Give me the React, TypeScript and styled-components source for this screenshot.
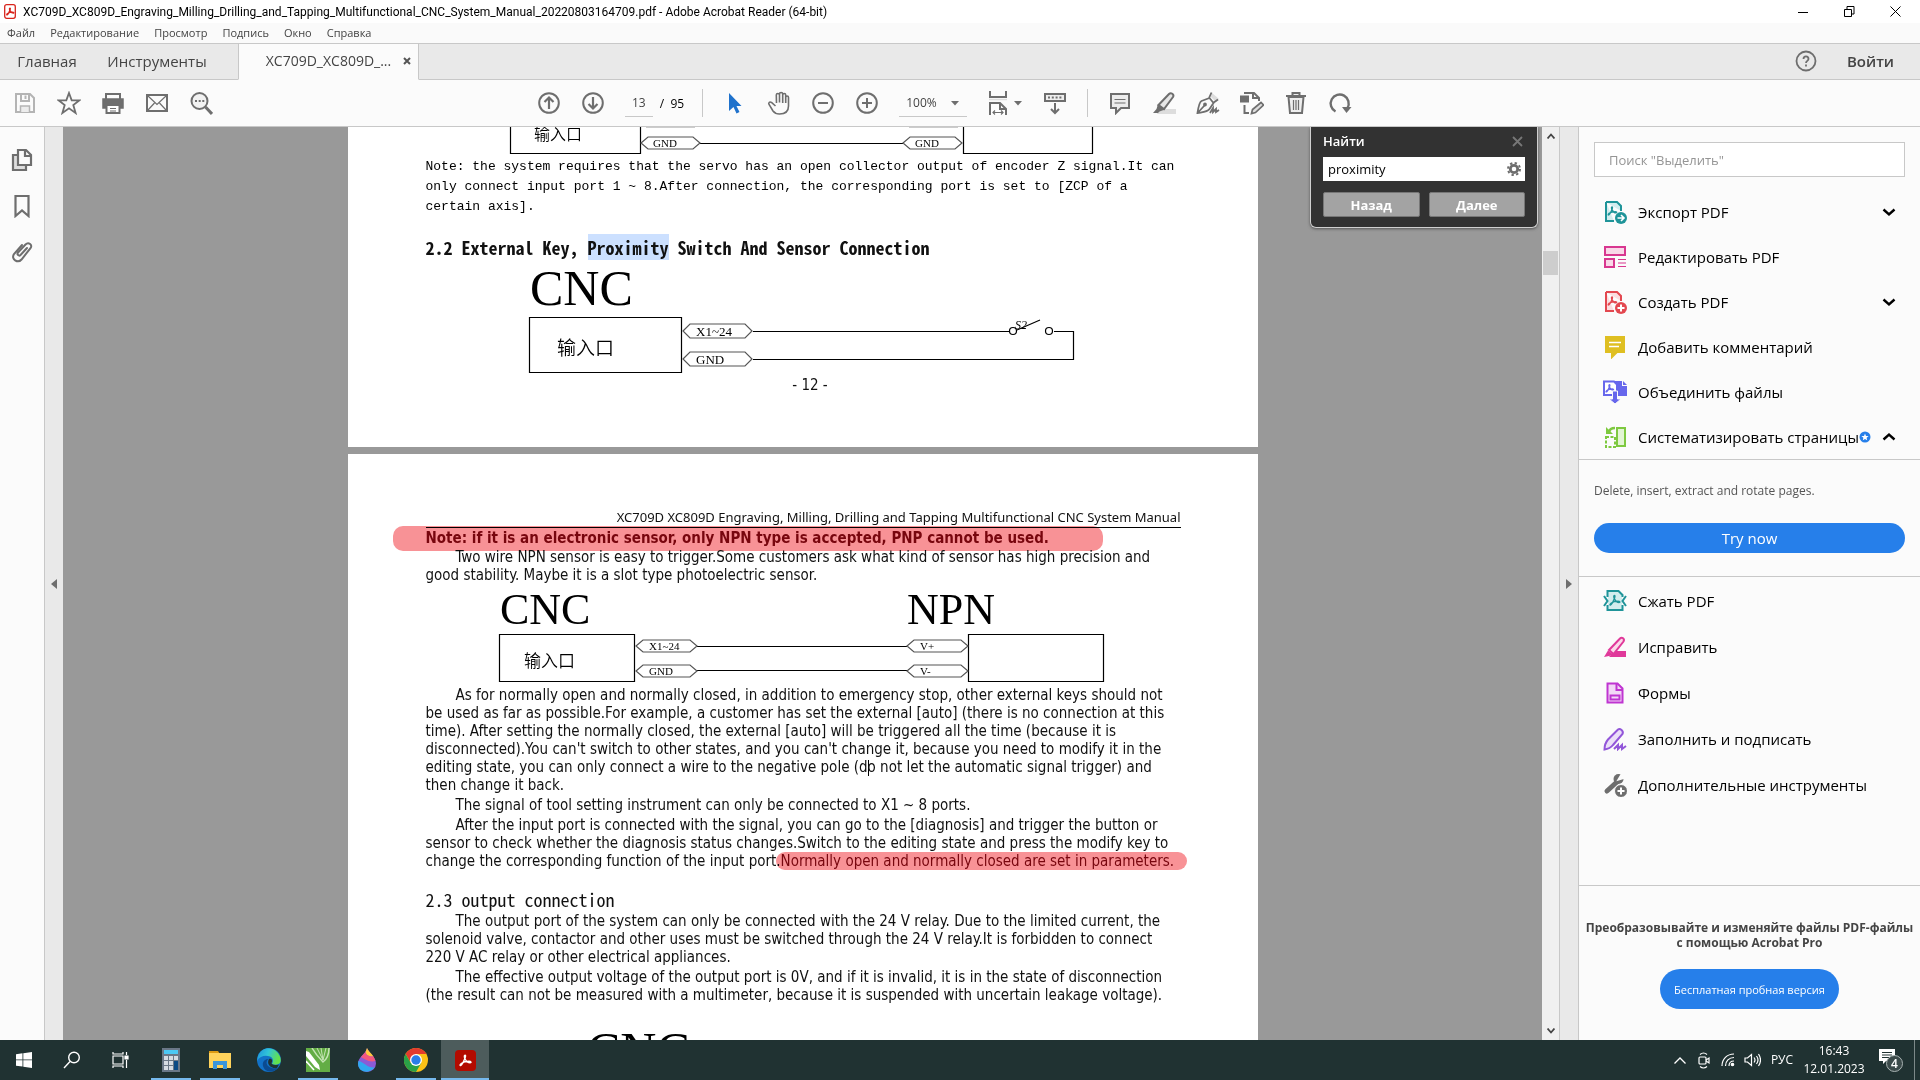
import React from 'react';
import styled, { createGlobalStyle } from 'styled-components';

const ui = `"Open Sans", "Noto Sans", sans-serif`;
const doc = `"DejaVu Sans Condensed", "Noto Sans", sans-serif`;
const mono = `"Noto Sans Mono CJK SC", "Liberation Mono", "Noto Sans CJK SC", monospace`;
const typed = `"Liberation Mono", "DejaVu Sans Mono", monospace`;
const line = '#c8c8c8';
const ink = '#6e6e6e';

const Global = createGlobalStyle`
  * { box-sizing: border-box; }
  body { margin: 0; background: #fbfbfb; font-family: ${ui}; color: #000; overflow: hidden; }
  button, input, select { font-family: inherit; }
  button { border: 0; padding: 0; background: none; color: inherit; }
  p, h1, h2, ul { margin: 0; padding: 0; }
  svg { display: block; }
`;

const Window = styled.div`
  display: flex;
  flex-direction: column;
  height: 100vh;
`;

/* ---------- title, menu and tabs ---------- */
const TitleBar = styled.header`
  display: flex;
  align-items: center;
  height: 23px;
  padding: 0 2px 0 4px;
  gap: 7px;
  background: #fff;
`;
const Title = styled.h1`
  flex: 1;
  font-family: Roboto, ${ui};
  font-size: 12px;
  font-weight: 400;
  white-space: nowrap;
`;
const WindowButtons = styled.div`
  display: flex;
`;
const WindowButton = styled.button`
  display: grid;
  place-items: center;
  width: 46px;
  height: 23px;
`;
const MenuBar = styled.nav`
  display: flex;
  align-items: center;
  gap: 15px;
  height: 20px;
  padding: 0 0 1px 7px;
  background: #fafafa;
`;
const MenuButton = styled.button`
  font-size: 11px;
  color: #444;
`;
const TabBar = styled.div`
  display: flex;
  height: 37px;
  background: #e9e9e9;
  border-top: 1px solid ${line};
`;
const Tab = styled.button<{ $width: number; $active?: boolean; $tail?: number }>`
  width: ${p => p.$width}px;
  display: flex;
  align-items: center;
  justify-content: center;
  gap: 12px;
  font-size: ${p => (p.$active ? 14 : 15)}px;
  color: #444;
  background: ${p => (p.$active ? '#fbfbfb' : 'transparent')};
  border-left: ${p => (p.$active ? `1px solid ${line}` : '0')};
  border-right: ${p => (p.$active ? `1px solid ${line}` : '0')};
  border-bottom: 1px solid ${p => (p.$active ? '#fbfbfb' : line)};
  padding: 0 ${p => p.$tail ?? 0}px 2px ${p => (p.$active ? 20 : 0)}px;
`;
const TabFill = styled.div`
  flex: 1;
  display: flex;
  align-items: center;
  justify-content: flex-end;
  gap: 30px;
  padding: 0 26px 2px 0;
  border-bottom: 1px solid ${line};
`;
const SignIn = styled.button`
  font-size: 15px;
  font-weight: 600;
  color: #444;
`;

/* ---------- toolbar ---------- */
const Toolbar = styled.div`
  display: grid;
  grid-template-columns: 1fr auto 1fr;
  align-items: center;
  height: 47px;
  padding: 0 34px 0 3px;
  background: #fbfbfb;
  border-bottom: 1px solid ${line};
`;
const Tools = styled.div`
  display: flex;
  align-items: center;
`;
const ToolButton = styled.button<{ $width?: number; $before?: number }>`
  display: grid;
  place-items: center;
  width: ${p => p.$width ?? 44}px;
  height: 44px;
  margin-left: ${p => p.$before ?? 0}px;
`;
const Divider = styled.span`
  width: 1px;
  height: 28px;
  margin: 0 10px;
  background: ${line};
`;
const PageBox = styled.label`
  display: flex;
  align-items: center;
  gap: 7px;
  padding: 0 8px 0 10px;
  font-size: 12px;
`;
const PageInput = styled.input`
  width: 28px;
  height: 27px;
  padding: 0;
  border: 0;
  border-bottom: 1px solid ${line};
  background: none;
  text-align: center;
  font-size: 12px;
  color: #444;
`;
const Zoom = styled.div`
  display: flex;
  align-items: center;
  width: 68px;
  height: 27px;
  margin: 0 18px 0 10px;
  border-bottom: 1px solid ${line};
`;
const ZoomSelect = styled.select`
  appearance: none;
  width: 50px;
  padding: 0 0 0 7px;
  border: 0;
  background: none;
  font-size: 12px;
  color: #444;
`;

/* ---------- work area ---------- */
const Work = styled.main`
  flex: 1;
  min-height: 0;
  display: flex;
`;
const Rail = styled.nav`
  display: flex;
  flex-direction: column;
  align-items: center;
  gap: 18px;
  width: 45px;
  padding-top: 19px;
  border-right: 1px solid ${line};
`;
const RailButton = styled.button`
  display: grid;
  place-items: center;
  width: 28px;
  height: 28px;
`;
const Strip = styled.button`
  display: grid;
  place-items: center;
  width: 18px;
  background: #e9e9e9;
`;
const Viewport = styled.div`
  position: relative;
  flex: 1;
  display: flex;
  flex-direction: column;
  align-items: center;
  gap: 7px;
  overflow: hidden;
  background: #999;
`;
const Page = styled.article<{ $top: number; $bottom: number }>`
  flex: none;
  width: 910px;
  padding: ${p => p.$top}px 77px ${p => p.$bottom}px 78px;
  background: #fff;
  font-family: ${doc};
  font-size: 15px;
  line-height: 18px;
  color: #111;
`;
const Line = styled.span`
  display: block;
  white-space: nowrap;
`;
const MonoNote = styled.p`
  font-family: ${typed};
  font-size: 13px;
  line-height: 20px;
  color: #000;
`;
const MonoHeading = styled.h2<{ $light?: boolean }>`
  margin-top: ${p => (p.$light ? 17 : 18)}px;
  font-family: ${mono};
  font-size: 18px;
  font-weight: ${p => (p.$light ? 400 : 600)};
  line-height: 25px;
  white-space: nowrap;
`;
const Found = styled.span`
  background: #cce0ff;
`;
const PageNumber = styled.p`
  padding-left: 14px;
  text-align: center;
`;
const RunningHead = styled.p`
  font-family: "Noto Sans", sans-serif;
  font-size: 13px;
  line-height: 20px;
  text-align: right;
  white-space: nowrap;
  border-bottom: 1px solid #000;
`;
const Warning = styled.p`
  height: 22px;
  margin-top: -2px;
  line-height: 25px;
  font-weight: 700;
  white-space: nowrap;
`;
const Mark = styled.mark<{ $left: number; $right: number }>`
  display: inline-block;
  margin-left: -${p => p.$left}px;
  padding: 0 ${p => p.$right}px 0 ${p => p.$left}px;
  border-radius: 10px;
  background: #f89296;
  color: #78060e;
  mix-blend-mode: multiply;
`;
const Para = styled.p`
  margin-bottom: 2px;
  text-indent: 30px;
  & > span + span { text-indent: 0; }
  mark { text-indent: 0; }
`;
const Caret = styled.i`
  display: inline-block;
  width: 1px;
  height: 16px;
  margin-right: -1px;
  vertical-align: text-bottom;
  background: #000;
`;

/* ---------- find box ---------- */
const FindBox = styled.form`
  position: absolute;
  top: 0;
  right: 4px;
  width: 228px;
  padding: 4px 12px 10px 12px;
  background: #323232;
  border: 1px solid #d0d0d0;
  border-top: 0;
  border-radius: 0 0 6px 6px;
  box-shadow: 0 1px 3px #555;
  color: #fff;
`;
const FindHead = styled.div`
  display: flex;
  justify-content: space-between;
  align-items: center;
  height: 20px;
  padding-right: 2px;
  font-size: 13px;
  font-weight: 600;
`;
const FindField = styled.div`
  display: flex;
  align-items: center;
  height: 24px;
  margin: 6px 0 11px;
  padding-right: 4px;
  background: #fff;
`;
const FindInput = styled.input`
  flex: 1;
  min-width: 0;
  padding: 0 0 0 5px;
  border: 0;
  background: none;
  font-size: 13px;
`;
const FindActions = styled.div`
  display: grid;
  grid-template-columns: 1fr 1fr;
  gap: 9px;
`;
const FindButton = styled.button`
  height: 25px;
  border: 1px solid #777;
  border-radius: 2px;
  background: #a3a3a3;
  font-size: 13px;
  font-weight: 700;
  color: #fff;
`;

/* ---------- scroll bar ---------- */
const ScrollBar = styled.div`
  display: flex;
  flex-direction: column;
  align-items: center;
  width: 18px;
  background: #f0f0f0;
  border-right: 1px solid ${line};
`;
const ScrollButton = styled.button`
  display: grid;
  place-items: center;
  width: 16px;
  height: 18px;
`;
const Track = styled.div`
  flex: 1;
  padding-top: 106px;
`;
const Thumb = styled.div`
  width: 15px;
  height: 24px;
  background: #cdcdcd;
`;

/* ---------- tools panel ---------- */
const Panel = styled.aside`
  display: flex;
  flex-direction: column;
  width: 342px;
  border-left: 1px solid ${line};
  background: #fbfbfb;
`;
const SearchField = styled.input`
  height: 35px;
  margin: 15px 15px 12px;
  padding: 0 14px;
  border: 1px solid ${line};
  background: #fff;
  font-size: 13px;
  color: #333;
  &::placeholder { color: #959595; opacity: 1; }
`;
const ToolList = styled.ul<{ $pitch: number }>`
  list-style: none;
  display: grid;
  grid-template-columns: 100%;
  grid-auto-rows: ${p => p.$pitch}px;
`;
const ToolRow = styled.button`
  display: flex;
  align-items: center;
  width: 100%;
  height: 100%;
  padding: 0 24px;
  gap: 11px;
  font-size: 15px;
  text-align: left;
  white-space: nowrap;
  svg { flex: none; }
`;
const RowName = styled.span`
  flex: 1;
  min-width: 0;
`;
const Promo = styled.section`
  display: flex;
  flex-direction: column;
  gap: 22px;
  height: 118px;
  margin-bottom: 1px;
  padding: 21px 15px 0;
  border-top: 1px solid ${line};
  border-bottom: 1px solid ${line};
  font-size: 12px;
  line-height: 20px;
  color: #555;
`;
const BlueButton = styled.button<{ $tall?: boolean }>`
  height: ${p => (p.$tall ? 40 : 30)}px;
  padding: 0 14px;
  border-radius: 20px;
  background: #267fea;
  font-size: ${p => (p.$tall ? 11 : 15)}px;
  color: #fff;
`;
const Upsell = styled.section`
  display: flex;
  flex-direction: column;
  align-items: center;
  gap: 19px;
  margin-top: auto;
  padding: 34px 0 31px;
  border-top: 1px solid ${line};
  text-align: center;
  font-size: 12px;
  font-weight: 700;
  line-height: 15px;
  color: #444;
  white-space: nowrap;
`;

/* ---------- task bar ---------- */
const TaskBar = styled.footer`
  display: flex;
  height: 40px;
  background: #203232;
  color: #fff;
`;
const Task = styled.button<{ $open?: boolean; $active?: boolean; $after?: number }>`
  display: grid;
  place-items: center;
  width: 48px;
  height: 40px;
  margin-right: ${p => p.$after ?? 1}px;
  background: ${p =>
    p.$open
      ? `linear-gradient(#76b9ed, #76b9ed) center bottom / ${p.$active ? 48 : 40}px 2px no-repeat`
      : 'none'};
  background-color: ${p => (p.$active ? '#4d5c5c' : 'transparent')};
`;
const Tray = styled.div`
  display: flex;
  align-items: center;
  margin-left: auto;
  padding-right: 1px;
  font-size: 12px;
`;
const TrayButton = styled.button<{ $width: number }>`
  display: grid;
  place-items: center;
  width: ${p => p.$width}px;
  height: 40px;
  font-size: 12px;
  line-height: 18px;
`;
const ShowDesktop = styled.button`
  width: 5px;
  height: 40px;
  border-left: 1px solid #7c8888;
`;

/* ---------- icons ---------- */
type IconProps = { size?: number; w?: number; color?: string; children: React.ReactNode };
const Icon = ({ size = 24, w = 2, color = ink, children }: IconProps) => (
  <svg width={size} height={size} viewBox="0 0 24 24" fill="none" stroke={color} strokeWidth={w} aria-hidden="true">
    {children}
  </svg>
);
const PdfMark = ({ x = 0, y = 0, s = 1 }: { x?: number; y?: number; s?: number }) => (
  <path
    transform={`translate(${x} ${y}) scale(${s})`}
    strokeWidth={1.4 / s}
    d="M6 1C5 1 5.200 3 6 4.500C7 6.500 8.500 8 10.500 8C12 8 11.500 6.600 9.500 6.600C7 6.600 4 7.500 2.500 8.700C.5 10.300 1.500 11.300 2.800 9.800C4.500 7.800 7.500 1 6 1Z"
  />
);
const Triangle = ({ dir }: { dir: 'left' | 'right' | 'down' }) => {
  const d = { left: 'M9 1v10L3 6z', right: 'M3 1v10l6-5z', down: 'M2 4h8L6 8.500z' }[dir];
  return (
    <svg width="12" height="12" viewBox="0 0 12 12" aria-hidden="true"><path d={d} fill={ink} /></svg>
  );
};
const Chevron = ({ up }: { up?: boolean }) => (
  <svg width="14" height="14" viewBox="0 0 14 14" fill="none" stroke="#000" strokeWidth="2.400" aria-hidden="true">
    <path d={up ? 'M1.500 9.500L7 4.500l5.500 5' : 'M1.500 4.500L7 9.500l5.500-5'} />
  </svg>
);

const icons = {
  save: (
    <Icon color="#b4b4b4">
      <path d="M3 3h14l4 4v14H3z" /><path d="M8 3v7h8V3" /><path d="M12.500 4.500v3.500" /><path d="M7.500 21v-6h9v6" fill="#ececec" strokeWidth="1.500" />
    </Icon>
  ),
  star: <Icon w={1.8}><path d="M12 2l2.700 7.300H22.500l-6.200 4.800 2.300 7.900L12 17.300 5.400 22l2.300-7.900L1.500 9.300h7.800z" /></Icon>,
  print: (
    <Icon>
      <path d="M5 8V3h14v5" /><path d="M2 8h20v9h-3v-2H5v2H2z" fill={ink} strokeWidth="1.500" /><path d="M5.500 14h13v8h-13z" fill="#fff" /><path d="M9 17.500h6M9 20h6" strokeWidth="1" />
    </Icon>
  ),
  mail: <Icon><path d="M2 4h20v16H2z" /><path d="M3 5l9 8.500L21 5M3 19l6.500-7M21 19l-6.500-7" strokeWidth="1.200" /></Icon>,
  search: (
    <Icon><circle cx="10.500" cy="10" r="8" fill="#f2f2f2" /><path d="M16.500 16l6.500 7" strokeWidth="3" /><path d="M6 10h2M9.700 10h2M13.300 10h2" /></Icon>
  ),
  up: <Icon><circle cx="12" cy="12" r="9.800" /><path d="M12 18V7M7.500 11L12 6.500l4.500 4.500" strokeWidth="2.200" /></Icon>,
  down: <Icon><circle cx="12" cy="12" r="9.800" /><path d="M12 6v11M7.500 13l4.500 4.500 4.500-4.500" strokeWidth="2.200" /></Icon>,
  pointer: <Icon w={0}><path d="M6 2v18l4.500-4 3 6.500 3-1.500-3-6h5z" fill="#1f72cc" /></Icon>,
  hand: (
    <Icon w={1.6}>
      <path d="M8.500 15L4.500 11.500c-2-1.300-3.500.5-2.300 2.200L6 20c1.500 2 3 3 6.500 3 6 0 9-3 9-8V6.500c0-2-2.800-2-2.800 0V12M18.700 12V4c0-2-3-2-3 0v8M15.700 11.500V3c0-2-3.200-2-3.200 0v8.500M12.500 11.500V4c0-2-3.200-2-3.200 0L9.500 12" />
    </Icon>
  ),
  minus: <Icon><circle cx="12" cy="12" r="9.800" /><path d="M7 12h10" /></Icon>,
  plus: <Icon><circle cx="12" cy="12" r="9.800" /><path d="M7 12h10M12 7v10" /></Icon>,
  fit: (
    <Icon>
      <path d="M4 0v6h16V0" /><path d="M4 24V12h10l6 6v6M14 12v6h6" fill="#fff" /><path d="M7 21.500h10M9 19.500l-2 2 2 2M15 19.500l2 2-2 2" strokeWidth="1.200" /><path d="M3 8.500h18" stroke="#ddd" strokeWidth="1.500" />
    </Icon>
  ),
  scroll: <Icon><path d="M2 3h20v7H2z" fill="#eee" /><path d="M5 6.500h14" strokeDasharray="2 1.800" /><path d="M12 12v10M8 18l4 4 4-4" /></Icon>,
  comment: <Icon><path d="M3 3h18v14h-8l-5 5v-5H3z" fill="#ececec" /><path d="M6.500 8.500h11M6.500 12h11" strokeWidth="1.200" /></Icon>,
  highlight: (
    <Icon>
      <path d="M7 18h17v5H5z" fill="#ddd" stroke="none" /><path d="M6.500 14L17 3c2-2 5.500.5 4 3L12 18z" fill="#e6e6e6" /><path d="M6 13l7 5.500-5.500 2L6 22H1l3.500-4z" fill={ink} stroke="none" />
    </Icon>
  ),
  sign: (
    <Icon w={1.8}>
      <path d="M14 5l2-3 7 6-3 3z" fill="#ddd" stroke="none" /><path d="M1.500 22c1-7 2-11 4-12l8-3 4 5-4 6c-2 3-6 3-12 4zM2 21.500l6.500-7M13 7l2.500-5.500M17 12l5-3.500" /><path d="M14 22l3-5v4l3-3v3l3-2" /><circle cx="9" cy="13.500" r="1" />
    </Icon>
  ),
  edit: (
    <Icon>
      <path d="M1 5.500h7v5H1z" fill={ink} /><path d="M5 3V2h9l5 5v3M13 2v5h5M4.500 14v8H9" /><path d="M11.500 22.500l1-4 8.500-7 2.500 2.500-8 7.500z" fill="#ddd" strokeWidth="1.700" />
    </Icon>
  ),
  trash: <Icon><path d="M2 5h20M8.500 4V2h7v2M4.500 6L6 22h12l1.500-16z" fill="#eee" /><path d="M9.500 9v10M12 9v10M14.500 9v10" strokeWidth="1.200" /></Icon>,
  rotate: <Icon w={2.4}><path d="M7.500 20.500A9 9 0 1 1 19.500 17" /><path d="M14 16h9.500l-5 6z" fill={ink} stroke="none" /></Icon>,
  pages: <Icon w={2.2}><path d="M7 7H3v15h13v-4" fill="#ddd" /><path d="M8 2h8l5 5v10H8z" fill="#fbfbfb" /><path d="M15 2v6h6" /></Icon>,
  bookmark: <Icon w={2.2}><path d="M5.500 2h13v20L12 16.500 5.500 22z" /></Icon>,
  clip: <Icon w={2}><path d="M17 8l-6.500 7c-1.500 1.500-4-.5-2.500-2.300L15.500 4.500c3-3 7.500.5 5 3.700L11.500 19.500c-3.500 4-11 0-7.500-5.500L12 5" strokeLinecap="round" /></Icon>,
};

const panelIcons: Record<string, React.ReactNode> = {
  export: (
    <Icon color="#1f9499"><path d="M3 2h11l4 4v5M11 21H3V2" fill="#d3edee" /><PdfMark x={4} y={6} s={0.85} /><circle cx="18" cy="18" r="6" fill="#1f9499" stroke="none" /><path d="M14.500 18h6M18 15l3 3-3 3" stroke="#fff" strokeWidth="1.600" /></Icon>
  ),
  edit: <Icon color="#d83790"><path d="M2 2h20v8H2zM2 14h9v8H2z" fill="#f9d8e8" /><path d="M15 14.500h8M15 18h8M15 21.500h8" strokeWidth="1.200" /></Icon>,
  create: (
    <Icon color="#e34850"><path d="M3 2h11l4 4v5M11 21H3V2" fill="#fbdddf" /><PdfMark x={4} y={6} s={0.85} /><circle cx="18" cy="18" r="6" fill="#e34850" stroke="none" /><path d="M14.500 18h7M18 14.500v7" stroke="#fff" strokeWidth="2" /></Icon>
  ),
  comment: <Icon color="#dfbf22"><path d="M3 2h18v15h-7l-5 5v-5H3z" fill="#dfbf22" /><path d="M6 7.500h12M6 11.500h10" stroke="#fff" strokeWidth="1.600" /></Icon>,
  combine: (
    <Icon color="#6767ec"><path d="M12 1h7v5h5v10H12z" fill="#6767ec" stroke="none" /><path d="M20 1l4 4h-4z" fill="#6767ec" stroke="none" /><path d="M1 1.500h10l3 3V15H1z" fill="#fff" /><PdfMark x={2} y={4} s={0.75} /><path d="M9.500 11h5v8h3.500l-6 5-6-5h3.500z" fill="#6767ec" stroke="#fbfbfb" strokeWidth="1" /></Icon>
  ),
  organize: (
    <Icon color="#7ec940"><path d="M14 3h8v18h-8z" fill="#e2f5d3" /><path d="M3 12h9v10H3z" strokeDasharray="3 1.500" /><path d="M12 3c-4 0-5.500 1.500-6 4" strokeWidth="2.500" /><path d="M3 2v7h7z" fill="#7ec940" stroke="none" /></Icon>
  ),
  compress: (
    <Icon color="#1f9499"><path d="M4.500 8V2h11l4 4v2M19.500 16v5h-15v-5" fill="#d3edee" /><path d="M5 8h14v8H5z" fill="#d3edee" stroke="none" /><path d="M1 7l3.500 5L1 17M23 7l-3.500 5 3.500 5" /><PdfMark x={5.500} y={5.500} /></Icon>
  ),
  redact: (
    <Icon color="#e0399a"><path d="M12 16h11v6H6z" fill="#e0399a" stroke="none" /><path d="M6 15L17 3.500c2-2 5 .5 3.500 3L10.500 19z" fill="#fbd9ea" /><path d="M5 15.500l6 4.500-10 2z" fill="#e0399a" stroke="none" /></Icon>
  ),
  forms: <Icon color="#bf35d1"><path d="M4.500 2.500h10l5 5v14h-15z" fill="#f2d7f6" /><path d="M13.500 3v6h6M7.500 14.500h9v4h-9z" /></Icon>,
  fill: <Icon color="#9256d9"><path d="M1.500 22.500c0-4 1-7 3.500-10l10-10c2-1.500 6 1.500 4.500 4.500L10 18c-2 2.500-5 4-8.500 4.500z" fill="#ebdff8" /><path d="M11 22l4-4v4l4-4v4l4-3" /></Icon>,
  more: (
    <Icon color={ink}><path d="M4 18L15 8" strokeWidth="5" strokeLinecap="round" /><circle cx="15.500" cy="6" r="5" fill={ink} stroke="none" /><path d="M15.500 6.500l3-5 3.500 3z" fill="#fbfbfb" stroke="#fbfbfb" /><circle cx="18" cy="18" r="6.500" fill={ink} stroke="#fbfbfb" strokeWidth="1" /><path d="M14.500 18h7M18 14.500v7" stroke="#fff" /></Icon>
  ),
};

/* ---------- wiring drawings ---------- */
const Art = styled.svg`
  overflow: visible;
  font-family: "Liberation Serif", serif;
  text { fill: #000; stroke: none; }
  .cjk { font-family: "Noto Sans CJK SC", sans-serif; font-weight: 350; }
`;
const Plug = ({ x, y, w, h, label, size, dx = 13 }: { x: number; y: number; w: number; h: number; label: string; size: number; dx?: number }) => (
  <g>
    <path d={`M${x} ${y}l7-${h / 2}h${w - 14}l7 ${h / 2}l-7 ${h / 2}h-${w - 14}z`} stroke="#555" />
    <text x={x + dx} y={y + size * 0.35} fontSize={size}>{label}</text>
  </g>
);
const drawing = { width: '100%', fill: 'none', stroke: '#000', strokeWidth: 1.2 };

const TopDrawing = () => (
  <Art {...drawing} height="30">
    <path d="M84.500 0V26.500H214.500V0M537.500 0V26.500H666.500V0M274 16.500H477" />
    <path d="M220 .5h49M483 .5h49" stroke="#ccc" />
    <Plug x={215} y={16} w={59} h={12} label="GND" size={11} dx={12} />
    <Plug x={477} y={16} w={59} h={12} label="GND" size={11} dx={12} />
    <text className="cjk" x="108" y="13" fontSize="16">输入口</text>
  </Art>
);
const SwitchDrawing = () => (
  <Art {...drawing} height="116">
    <text x="104" y="45" fontSize="50">CNC</text>
    <path d="M103.500 57.500h152v55h-152zM327 71.500H583M628 71.500h19.500v28H327M591 70L614 60" />
    <circle cx="587" cy="71" r="3.500" /><circle cx="623" cy="71" r="3.500" />
    <Plug x={257} y={71} w={69} h={14} label="X1~24" size={13} />
    <Plug x={257} y={99} w={69} h={14} label="GND" size={13} />
    <text x="589" y="69" fontSize="12" fontStyle="italic">S2</text>
    <text className="cjk" x="131" y="95" fontSize="19">输入口</text>
  </Art>
);
const SensorDrawing = () => (
  <Art {...drawing} height="100">
    <text x="74" y="38" fontSize="44">CNC</text>
    <text x="481" y="38" fontSize="44">NPN</text>
    <path d="M73.500 48.500h135v47h-135zM542.500 48.500h135v47h-135zM271 60.500H481M271 84.500H481" />
    <Plug x={210} y={60} w={61} h={12} label="X1~24" size={11} />
    <Plug x={210} y={85} w={61} h={12} label="GND" size={11} />
    <Plug x={481} y={60} w={61} h={12} label="V+" size={11} />
    <Plug x={481} y={85} w={61} h={12} label="V-" size={11} />
    <text className="cjk" x="98" y="81" fontSize="17">输入口</text>
  </Art>
);
const OutputDrawing = () => (
  <Art {...drawing} height="90"><text x="161" y="61" fontSize="50">CNC</text></Art>
);

const menus = ['Файл', 'Редактирование', 'Просмотр', 'Подпись', 'Окно', 'Справка'];
const mainTools = [
  { id: 'export', name: 'Экспорт PDF', more: true },
  { id: 'edit', name: 'Редактировать PDF' },
  { id: 'create', name: 'Создать PDF', more: true },
  { id: 'comment', name: 'Добавить комментарий' },
  { id: 'combine', name: 'Объединить файлы' },
  { id: 'organize', name: 'Систематизировать страницы', open: true },
];
const otherTools = [
  { id: 'compress', name: 'Сжать PDF' },
  { id: 'redact', name: 'Исправить' },
  { id: 'forms', name: 'Формы' },
  { id: 'fill', name: 'Заполнить и подписать' },
  { id: 'more', name: 'Дополнительные инструменты' },
];

const Row = ({ tool }: { tool: { id: string; name: string; more?: boolean; open?: boolean } }) => (
  <li>
    <ToolRow type="button">
      {panelIcons[tool.id]}
      <RowName>{tool.name}</RowName>
      {tool.open && (
        <svg width="12" height="12" viewBox="0 0 12 12" aria-hidden="true">
          <circle cx="6" cy="6" r="5.500" fill="#267fea" />
          <path d="M6 2.500l1 2.400 2.600.2-2 1.700.6 2.500L6 8l-2.200 1.300.6-2.500-2-1.700L5 4.900z" fill="#fff" />
        </svg>
      )}
      {(tool.more || tool.open) && <Chevron up={tool.open} />}
    </ToolRow>
  </li>
);

const Tasks = () => (
  <>
    <Task $after={0} aria-label="Start"><svg width="16" height="16" viewBox="0 0 16 16" fill="#fff"><path d="M0 2.200L6.500 1.300V7.500H0zM7.300 1.200L16 0v7.500H7.300zM0 8.300h6.500v6.300L0 13.700zM7.300 8.300H16V16l-8.700-1.200z" /></svg></Task>
    <Task $after={0} aria-label="Search"><svg width="18" height="18" viewBox="0 0 18 18" fill="none" stroke="#fff" strokeWidth="1.400"><circle cx="11" cy="6.500" r="5.300" /><path d="M7 10.500L1 17" /></svg></Task>
    <Task $after={3} aria-label="Task view"><svg width="18" height="18" viewBox="0 0 18 18" fill="none" stroke="#fff" strokeWidth="1.200"><path d="M2 5h10v8H2zM2 1v2h10V1M2 17v-2h10v2M15.500 1v3M15.500 9v8" /><path d="M14 5h3v3h-3z" fill="#fff" /></svg></Task>
    <Task $open aria-label="Calculator">
      <svg width="18" height="24" viewBox="0 0 18 24"><path fill="#6a7787" d="M0 0h18v24H0z" /><path fill="#4cc8f4" d="M2 2h14v4H2z" /><path fill="#d5dbe3" d="M2 8h4v4H2zM7 8h4v4H7zM12 8h4v4h-4zM2 13h4v4H2zM7 13h4v4H7zM2 18h4v4H2zM7 18h4v4H7z" /><path fill="#0b4a86" d="M12 13h4v9h-4z" /></svg>
    </Task>
    <Task $open aria-label="Explorer">
      <svg width="22" height="20" viewBox="0 0 22 20"><path fill="#dd9b13" d="M0 1h9l2 3H0z" /><path fill="#ffd35c" d="M0 3h22v15H0z" /><path fill="#3a95dc" d="M4 11h14v8h-4v-4H8v4H4z" /></svg>
    </Task>
    <Task aria-label="Edge">
      <svg width="24" height="24" viewBox="0 0 24 24">
        <defs><linearGradient id="edge" x1="0" x2="1" y2="0.300"><stop stopColor="#1b8fdc" /><stop offset="0.500" stopColor="#31c4d8" /><stop offset="1" stopColor="#63e04b" /></linearGradient></defs>
        <circle cx="12" cy="12" r="12" fill="#1272c8" /><path d="M1 8C4 0 13-2 19 3c4 3.500 6 9 4 12-2 2-6 2-8 1 1-2 2-6-2-7.500C8 7 3 8 0 13z" fill="url(#edge)" /><path d="M11 11c-4 5 1 11 10 9C17 25 8 25 6 18c-1-4 2-7 5-7z" fill="#0b4b91" /><path d="M12 11c3-1 4 2 2.500 4 0 1 2 3 7.500 1.500L20 20c-6 1-11-4-8-9z" fill="#203232" />
      </svg>
    </Task>
    <Task $open aria-label="CorelDRAW">
      <svg width="24" height="24" viewBox="0 0 24 24"><path fill="#63ad45" d="M0 0h24v24H0z" /><path d="M6 0c4 7 8 11 11 14C21 11 23 5 23 0" fill="none" stroke="#c6e5b6" strokeWidth="1.500" /><path d="M11 0l6 12M15 0l2 12M20 0l-3 12" stroke="#c6e5b6" /><path d="M0 3l3 1 10 13 1 5-5-3L0 8z" fill="#fff" /><path d="M0 13l8 9" stroke="#fff" strokeWidth="1.500" /></svg>
    </Task>
    <Task aria-label="Paint">
      <svg width="18" height="24" viewBox="0 0 18 24">
        <path d="M9 0c2 5 9 9 9 15.500A9 8.500 0 0 1 0 15.500C0 9 8 6 9 0z" fill="#8b5bd6" /><path d="M9 0c1 3 4 5 6.500 8.500C11 9 8 7 7.500 4z" fill="#ffc83d" /><path d="M7.500 4C8 7 11 9 15.500 8.500L17.500 13C11 15 5 10 3 9z" fill="#f2577e" /><path d="M.5 13C6 14 9 20 16.500 19.500 12 26 0 25 0 15.500z" fill="#30a8f0" />
      </svg>
    </Task>
    <Task $open aria-label="Chrome">
      <svg width="24" height="24" viewBox="0 0 24 24"><circle cx="12" cy="12" r="12" fill="#fbc116" /><path d="M1.600 6A12 12 0 0 1 22.400 6H12l-5 9z" fill="#e33b2e" /><path d="M1.600 6A12 12 0 0 0 12 24l5.200-9H6.800z" fill="#2aa147" /><circle cx="12" cy="12" r="6" fill="#fff" /><circle cx="12" cy="12" r="4.700" fill="#2a7de9" /></svg>
    </Task>
    <Task $open $active aria-label="Acrobat">
      <svg width="21" height="21" viewBox="0 0 21 21" fill="none" stroke="#fff"><rect width="21" height="21" rx="4" fill="#b30b00" stroke="none" /><PdfMark x={3.500} y={4} s={1.100} /></svg>
    </Task>
  </>
);

export default function App() {
  return (
    <Window>
      <Global />
      <TitleBar>
        <svg width="12" height="15" viewBox="0 0 12 15" fill="none" stroke="#d8241c"><rect x=".7" y=".7" width="10.600" height="13.600" rx="2" fill="#fff" strokeWidth="1.300" /><PdfMark x={1.800} y={3.500} s={0.700} /></svg>
        <Title>XC709D_XC809D_Engraving_Milling_Drilling_and_Tapping_Multifunctional_CNC_System_Manual_20220803164709.pdf - Adobe Acrobat Reader (64-bit)</Title>
        <WindowButtons>
          <WindowButton aria-label="Minimize"><svg width="10" height="10" stroke="#000"><path d="M0 5.500h10" /></svg></WindowButton>
          <WindowButton aria-label="Restore"><svg width="11" height="11" fill="none" stroke="#000"><path d="M.5 3.500h7v7h-7zM3 3V.5h7V8H8" /></svg></WindowButton>
          <WindowButton aria-label="Close"><svg width="11" height="11" stroke="#000"><path d="M.5.5l10 10M10.500.5l-10 10" /></svg></WindowButton>
        </WindowButtons>
      </TitleBar>
      <MenuBar>{menus.map(m => <MenuButton key={m} type="button">{m}</MenuButton>)}</MenuBar>
      <TabBar>
        <Tab $width={94} type="button">Главная</Tab>
        <Tab $width={144} $tail={18} type="button">Инструменты</Tab>
        <Tab $width={181} $active type="button">
          XC709D_XC809D_...
          <svg width="8" height="8" stroke="#555" strokeWidth="2"><path d="M1 1l6 6M7 1L1 7" /></svg>
        </Tab>
        <TabFill>
          <button type="button" aria-label="Help">
            <svg width="22" height="22" viewBox="0 0 22 22" fill="none" stroke={ink} strokeWidth="1.800"><circle cx="11" cy="11" r="9.500" /><path d="M8.500 9c0-3.500 5-3.500 5 0 0 2-2.500 1.800-2.500 4M11 14.500v2" /></svg>
          </button>
          <SignIn type="button">Войти</SignIn>
        </TabFill>
      </TabBar>
      <Toolbar>
        <Tools>
          <ToolButton aria-label="Save">{icons.save}</ToolButton>
          <ToolButton aria-label="Star">{icons.star}</ToolButton>
          <ToolButton aria-label="Print">{icons.print}</ToolButton>
          <ToolButton aria-label="Mail">{icons.mail}</ToolButton>
          <ToolButton aria-label="Find">{icons.search}</ToolButton>
        </Tools>
        <Tools>
          <ToolButton aria-label="Previous page">{icons.up}</ToolButton>
          <ToolButton aria-label="Next page">{icons.down}</ToolButton>
          <PageBox><PageInput defaultValue="13" aria-label="Page" />/&nbsp; 95</PageBox>
          <Divider />
          <ToolButton aria-label="Select">{icons.pointer}</ToolButton>
          <ToolButton aria-label="Pan">{icons.hand}</ToolButton>
          <ToolButton aria-label="Zoom out">{icons.minus}</ToolButton>
          <ToolButton aria-label="Zoom in">{icons.plus}</ToolButton>
          <Zoom><ZoomSelect aria-label="Zoom"><option>100%</option></ZoomSelect><Triangle dir="down" /></Zoom>
          <ToolButton $width={26} aria-label="Fit width">{icons.fit}</ToolButton>
          <ToolButton $width={14} aria-label="Fit options"><Triangle dir="down" /></ToolButton>
          <ToolButton $before={8} aria-label="Scroll mode">{icons.scroll}</ToolButton>
          <Divider />
          <ToolButton aria-label="Comment">{icons.comment}</ToolButton>
          <ToolButton aria-label="Highlight">{icons.highlight}</ToolButton>
          <ToolButton aria-label="Sign">{icons.sign}</ToolButton>
          <ToolButton aria-label="Edit">{icons.edit}</ToolButton>
          <ToolButton aria-label="Delete">{icons.trash}</ToolButton>
          <ToolButton aria-label="Rotate">{icons.rotate}</ToolButton>
        </Tools>
      </Toolbar>
      <Work>
        <Rail>
          <RailButton aria-label="Pages">{icons.pages}</RailButton>
          <RailButton aria-label="Bookmarks">{icons.bookmark}</RailButton>
          <RailButton aria-label="Attachments">{icons.clip}</RailButton>
        </Rail>
        <Strip aria-label="Collapse left"><Triangle dir="left" /></Strip>
        <Viewport>
          <Page $top={0} $bottom={53}>
            <TopDrawing />
            <MonoNote>
              <Line>Note: the system requires that the servo has an open collector output of encoder Z signal.It can</Line>
              <Line>only connect input port 1 ~ 8.After connection, the corresponding port is set to [ZCP of a</Line>
              <Line>certain axis].</Line>
            </MonoNote>
            <MonoHeading>2.2 External Key, <Found>Proximity</Found> Switch And Sensor Connection</MonoHeading>
            <SwitchDrawing />
            <PageNumber>- 12 -</PageNumber>
          </Page>
          <Page $top={53} $bottom={20}>
            <RunningHead>XC709D XC809D Engraving, Milling, Drilling and Tapping Multifunctional CNC System Manual</RunningHead>
            <Warning><Mark $left={33} $right={54}>Note: if it is an electronic sensor, only NPN type is accepted, PNP cannot be used.</Mark></Warning>
            <Para>
              <Line>Two wire NPN sensor is easy to trigger.Some customers ask what kind of sensor has high precision and</Line>
              <Line>good stability. Maybe it is a slot type photoelectric sensor.</Line>
            </Para>
            <SensorDrawing />
            <Para>
              <Line>As for normally open and normally closed, in addition to emergency stop, other external keys should not</Line>
              <Line>be used as far as possible.For example, a customer has set the external [auto] (there is no connection at this</Line>
              <Line>time). After setting the normally closed, the external [auto] will be triggered all the time (because it is</Line>
              <Line>disconnected).You can't switch to other states, and you can't change it, because you need to modify it in the</Line>
              <Line>editing state, you can only connect a wire to the negative pole (d<Caret />o not let the automatic signal trigger) and</Line>
              <Line>then change it back.</Line>
            </Para>
            <Para>
              <Line>The signal of tool setting instrument can only be connected to X1 ~ 8 ports.</Line>
            </Para>
            <Para>
              <Line>After the input port is connected with the signal, you can go to the [diagnosis] and trigger the button or</Line>
              <Line>sensor to check whether the diagnosis status changes.Switch to the editing state and press the modify key to</Line>
              <Line>change the corresponding function of the input port.<Mark $left={5} $right={13}>Normally open and normally closed are set in parameters.</Mark></Line>
            </Para>
            <MonoHeading $light>2.3 output connection</MonoHeading>
            <Para>
              <Line>The output port of the system can only be connected with the 24 V relay. Due to the limited current, the</Line>
              <Line>solenoid valve, contactor and other uses must be switched through the 24 V relay.It is forbidden to connect</Line>
              <Line>220 V AC relay or other electrical appliances.</Line>
            </Para>
            <Para>
              <Line>The effective output voltage of the output port is 0V, and if it is invalid, it is in the state of disconnection</Line>
              <Line>(the result can not be measured with a multimeter, because it is suspended with uncertain leakage voltage).</Line>
            </Para>
            <OutputDrawing />
          </Page>
          <FindBox onSubmit={e => e.preventDefault()}>
            <FindHead>
              <label htmlFor="find">Найти</label>
              <button type="button" aria-label="Close find"><svg width="11" height="11" stroke="#777" strokeWidth="1.800"><path d="M1 1l9 9M10 1l-9 9" /></svg></button>
            </FindHead>
            <FindField>
              <FindInput id="find" defaultValue="proximity" />
              <svg width="14" height="14" viewBox="0 0 14 14" fill="none" stroke={ink}><circle cx="7" cy="7" r="3.700" strokeWidth="2.800" /><circle cx="7" cy="7" r="6" strokeWidth="2" strokeDasharray="2.350 2.350" /></svg>
            </FindField>
            <FindActions>
              <FindButton type="button">Назад</FindButton>
              <FindButton type="submit">Далее</FindButton>
            </FindActions>
          </FindBox>
        </Viewport>
        <ScrollBar>
          <ScrollButton aria-label="Scroll up"><svg width="8" height="6" fill="none" stroke="#444" strokeWidth="1.800"><path d="M.5 5.500L4 1.500l3.500 4" /></svg></ScrollButton>
          <Track><Thumb /></Track>
          <ScrollButton aria-label="Scroll down"><svg width="8" height="6" fill="none" stroke="#444" strokeWidth="1.800"><path d="M.5.5L4 4.500 7.500.5" /></svg></ScrollButton>
        </ScrollBar>
        <Strip aria-label="Collapse right"><Triangle dir="right" /></Strip>
        <Panel>
          <SearchField type="search" placeholder={'Поиск "Выделить"'} aria-label="Поиск" />
          <ToolList $pitch={45}>{mainTools.map(t => <Row key={t.id} tool={t} />)}</ToolList>
          <Promo>
            <p>Delete, insert, extract and rotate pages.</p>
            <BlueButton type="button">Try now</BlueButton>
          </Promo>
          <ToolList $pitch={46}>{otherTools.map(t => <Row key={t.id} tool={t} />)}</ToolList>
          <Upsell>
            <p>Преобразовывайте и изменяйте файлы PDF-файлы<br />с помощью Acrobat Pro</p>
            <BlueButton $tall type="button">Бесплатная пробная версия</BlueButton>
          </Upsell>
        </Panel>
      </Work>
      <TaskBar>
        <Tasks />
        <Tray>
          <TrayButton $width={24} aria-label="Hidden icons"><svg width="12" height="7" fill="none" stroke="#fff" strokeWidth="1.300"><path d="M.5 6.500L6 1l5.500 5.500" /></svg></TrayButton>
          <TrayButton $width={24} aria-label="Camera"><svg width="12" height="17" fill="none" stroke="#fff" strokeWidth="1.200"><rect x="1" y="5" width="7" height="7" rx="1" /><path d="M8 8l3-2v5l-3-2M2 2.500Q5.500-.5 9 2.500M2 14.500Q5.500 17.500 9 14.500" /></svg></TrayButton>
          <TrayButton $width={24} aria-label="Network"><svg width="14" height="14" fill="none" stroke="#fff" strokeWidth="1.200"><path d="M1 13C1 6 6 1 13 1M4.500 13C4.500 8 8 4.500 13 4.500M8 13c0-3 2-5 5-5" /><circle cx="11.500" cy="11.500" r="1.200" fill="#fff" /></svg></TrayButton>
          <TrayButton $width={24} aria-label="Volume"><svg width="17" height="14" fill="none" stroke="#fff" strokeWidth="1.200"><path d="M1 5h2.500l4-3.500v11L3.500 9H1zM10 4.500q2 2.500 0 5M12.500 3q3 4 0 8M14.500 1q4 6 0 12" /></svg></TrayButton>
          <TrayButton $width={36}>РУС</TrayButton>
          <TrayButton $width={68}><span>16:43<br />12.01.2023</span></TrayButton>
          <TrayButton $width={46} aria-label="4 notifications">
            <svg width="26" height="26" viewBox="0 0 26 26"><path d="M1 2h16v12H8l-3 3v-3H1z" fill="#fff" /><path d="M4 5.500h10M4 8h10M4 10.500h7" stroke="#203232" /><circle cx="16.500" cy="16.500" r="8" fill="#3b4a4a" stroke="#a8b2b2" /><text x="13" y="21" fontSize="12" fontWeight="600" fill="#fff">4</text></svg>
          </TrayButton>
          <ShowDesktop aria-label="Show desktop" />
        </Tray>
      </TaskBar>
    </Window>
  );
}
